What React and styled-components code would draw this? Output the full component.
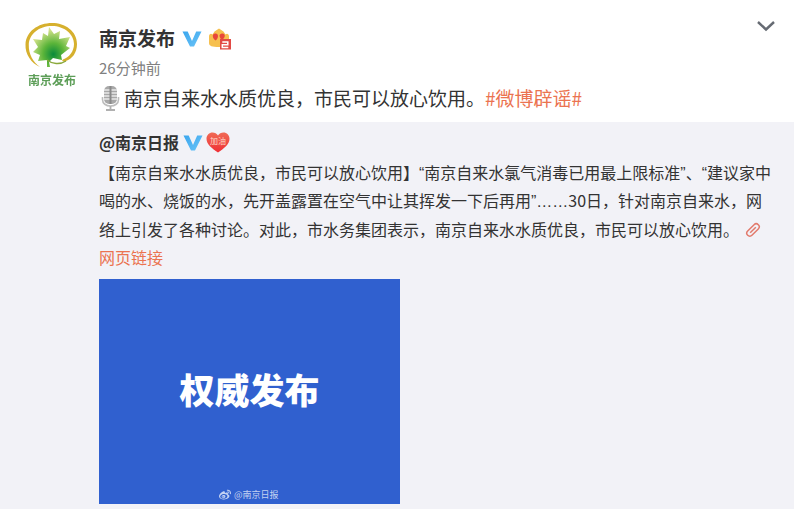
import React from 'react'
import styled, { createGlobalStyle } from 'styled-components'
import { FaWeibo } from 'react-icons/fa'

const GlobalStyle = createGlobalStyle`
html, body {
  margin: 0;
  padding: 0;
  background: #fff;
  overflow: hidden;
}
body {
  font-family: "Noto Sans CJK SC", "Liberation Sans", sans-serif;
  color: #333;
}
`

const Page = styled.div`
width: 794px;
height: 509px;
overflow: hidden;
`

const Header = styled.div`
display: flex;
height: 122px;
box-sizing: border-box;
padding: 20px 18px 0 24px;
`

const AvatarBox = styled.div`
width: 56px;
height: 66px;
margin-right: 19px;
display: flex;
flex-direction: column;
align-items: center;
flex-shrink: 0;
filter: blur(0.5px);
`

const AvatarText = styled.span`
font-size: 12px;
line-height: 13px;
font-weight: 700;
color: #5d9e58;
white-space: nowrap;
`

const Meta = styled.div`
flex: 1;
display: flex;
flex-direction: column;
`

const NameRow = styled.div`
display: flex;
align-items: center;
height: 36px;
`

const Name = styled.span`
font-size: 19px;
font-weight: 700;
color: #333;
line-height: 36px;
`

const Time = styled.div`
font-size: 15px;
line-height: 20px;
height: 20px;
margin-top: 2px;
color: #808080;
`

const PostText = styled.div`
display: flex;
align-items: center;
font-size: 19px;
line-height: 28px;
height: 28px;
margin-top: 6px;
margin-left: 1px;
color: #333;
white-space: nowrap;
`

const Topic = styled.span`
color: #eb7350;
`

const Chevron = styled.svg`
width: 20px;
height: 12px;
flex-shrink: 0;
`

const Card = styled.div`
background: #f2f2f7;
height: 387px;
box-sizing: border-box;
padding: 5px 16px 0 99px;
`

const SourceRow = styled.div`
display: flex;
align-items: center;
height: 30px;
`

const SourceName = styled.span`
font-size: 16px;
font-weight: 700;
color: #333;
`

const Body = styled.div`
font-size: 16px;
line-height: 28.4px;
color: #333;
margin-top: 1px;
text-spacing-trim: space-all;
`

const Narrow = styled.span`
font-family: "Liberation Sans", sans-serif;
line-height: 1;
`

const Link = styled.span`
display: block;
color: #eb7350;
`

const Picture = styled.div`
width: 301px;
height: 225px;
margin-top: 7px;
background: #3060cf;
position: relative;
display: flex;
align-items: center;
justify-content: center;
`

const PictureTitle = styled.span`
font-size: 35px;
font-weight: 900;
color: #fff;
margin-top: -5px;
`

const Watermark = styled.div`
position: absolute;
left: 120px;
bottom: 3px;
display: flex;
align-items: center;
gap: 3px;
font-size: 9px;
line-height: 12px;
color: rgba(255, 255, 255, 0.72);
`

const BadgeSvg = styled.svg`
margin-left: ${(p) => p.$gap}px;
flex-shrink: 0;
`

const VBadge = ({ gap = 7 }) => (
  <BadgeSvg $gap={gap} width="20" height="17" viewBox="0 0 20 17">
    <defs>
      <linearGradient id="vgrad" x1="0" y1="0" x2="1" y2="1">
        <stop offset="0" stopColor="#3aa6ee" />
        <stop offset="1" stopColor="#6cc4f7" />
      </linearGradient>
    </defs>
    <path d="M0.5 1.5h5.2L10 11l4.2-9.5h5.3L12 16.5H8z" fill="url(#vgrad)" />
  </BadgeSvg>
)

const Crown = () => (
  <BadgeSvg $gap={6} width="24" height="23" viewBox="0 0 24 23">
    <path d="M1 9.500C1 7 3 6 4.500 7.500L6.500 4.500 11 1.500l4.500 3 2 3C19 6 21 7 21 9.500V16c0 3-3 4-10 4S1 19 1 16z" fill="#f6c04f" />
    <path d="M7 6.500c1.800-.5 3 .8 3 2.500 0 2-1.300 3.500-2.300 4.500C6.300 12.500 4.800 11 4.800 9c0-1.300.9-2.200 2.200-2.500z" fill="#e8473a" />
    <path d="M14 6.500c1.800-.5 2.800.8 2.800 2.300 0 1.700-1.300 3.200-2.600 4.200-1.300-.9-2.700-2.400-2.700-4.200 0-1.300 1.200-2 2.500-2.300z" fill="#e8473a" />
    <rect x="12" y="12" width="11" height="10.500" fill="#e24a45" />
    <path d="M14.300 15h5.500v2.700h-5.500v2.700h6" fill="none" stroke="#fff" strokeWidth="1.500" />
  </BadgeSvg>
)

const Heart = () => (
  <BadgeSvg $gap={3} width="24" height="21" viewBox="0 0 24 21">
    <defs>
      <linearGradient id="hgrad" x1="0" y1="0" x2="0" y2="1">
        <stop offset="0" stopColor="#f06a55" />
        <stop offset="1" stopColor="#ef2f35" />
      </linearGradient>
    </defs>
    <path d="M12 20.500C6 16.500.5 12.500.5 6.800.5 3 3.300.5 6.500.5c2.400 0 4.300 1 5.500 3 1.200-2 3.100-3 5.500-3 3.200 0 6 2.500 6 6.300 0 5.700-5.500 9.700-11.500 13.700z" fill="url(#hgrad)" />
    <text x="12" y="12" textAnchor="middle" fontSize="8" fill="#ffd9c8" fontFamily="Noto Sans CJK SC, sans-serif">加油</text>
  </BadgeSvg>
)

const MicSvg = styled.svg`
margin: 0 4px 0 1px;
flex-shrink: 0;
`

const Mic = () => (
  <MicSvg width="19" height="26" viewBox="0 0 19 26">
    <rect x="3" y="1" width="13" height="18" rx="5" fill="#a8a8a8" />
    <path d="M3 5h13M3 8h13M3 11h13M3 14h13" stroke="#e8e8e8" strokeWidth="1.300" />
    <path d="M8.500 1h2v18h-2z" fill="#8a8a8a" />
    <path d="M1.500 12v2.500C1.500 18.500 5 21 9.500 21s8-2.500 8-6.500V12" fill="none" stroke="#bdbdbd" strokeWidth="1.600" />
    <path d="M9.500 21v3M5 25h9" stroke="#b0b0b0" strokeWidth="1.800" />
  </MicSvg>
)

const LinkSvg = styled.svg`
vertical-align: -2px;
margin-left: 6px;
`

const LinkIcon = () => (
  <LinkSvg width="16" height="16" viewBox="0 0 16 16">
    <g transform="rotate(-45 8 8)" fill="none" stroke="#e27a6c" strokeWidth="1.500">
      <rect x="0.500" y="5" width="15" height="6" rx="3" />
      <path d="M4 8h8" />
    </g>
  </LinkSvg>
)

const Logo = () => (
  <svg width="56" height="53" viewBox="0 0 56 53">
    <defs>
      <radialGradient id="leaf" cx="0.55" cy="0.68" r="0.62">
        <stop offset="0" stopColor="#0a8a3a" />
        <stop offset="0.45" stopColor="#5cb53a" />
        <stop offset="1" stopColor="#d3e28a" />
      </radialGradient>
    </defs>
    <path d="M16 47C7 43 1 34 1.500 24.500 2 11.500 14 3 28 3c13 0 25 8 25 21 0 9-5 15-11 17-3 1-5 0-3-1.500 6-2 11-8 11-15.500C50 14 40 6 28 6 15 6 5 14 4.800 25 4.500 34 9 42 16 47z" fill="#d6b02e" />
    <path d="M25 7l5 7 6-3-1 8 11-2-4 9 4 2-9 7 1 5-9-2-4 4 1 5-3 0 0-7-9 1 2-6-7-3 5-5-5-8 9 1 1-7 5 3z" fill="url(#leaf)" />
    <path d="M23 40C28 44 36 45 42 41" fill="none" stroke="#8aa83a" strokeWidth="1.400" />
  </svg>
)

export default function App() {
  return (
    <Page>
      <GlobalStyle />
      <Header>
        <AvatarBox>
          <Logo />
          <AvatarText>南京发布</AvatarText>
        </AvatarBox>
        <Meta>
          <NameRow>
            <Name>南京发布</Name>
            <VBadge />
            <Crown />
          </NameRow>
          <Time>26分钟前</Time>
          <PostText>
            <Mic />
            南京自来水水质优良，市民可以放心饮用。<Topic>#微博辟谣#</Topic>
          </PostText>
        </Meta>
        <Chevron viewBox="0 0 20 12">
          <path d="M2 2l8 7.500L18 2" fill="none" stroke="#666b73" strokeWidth="2.400" />
        </Chevron>
      </Header>
      <Card>
        <SourceRow>
          <SourceName>@南京日报</SourceName>
          <VBadge gap={4} />
          <Heart />
        </SourceRow>
        <Body>
          【南京自来水水质优良，市民可以放心饮用】<Narrow>“</Narrow>南京自来水氯气消毒已用最上限标准<Narrow>”</Narrow>、<Narrow>“</Narrow>建议家中喝的水、烧饭的水，先开盖露置在空气中让其挥发一下后再用<Narrow>”……</Narrow>30日，针对南京自来水，网络上引发了各种讨论。对此，市水务集团表示，南京自来水水质优良，市民可以放心饮用。
          <LinkIcon />
          <Link>网页链接</Link>
        </Body>
        <Picture>
          <PictureTitle>权威发布</PictureTitle>
          <Watermark>
            <FaWeibo size={12} />
            @南京日报
          </Watermark>
        </Picture>
      </Card>
    </Page>
  )
}
